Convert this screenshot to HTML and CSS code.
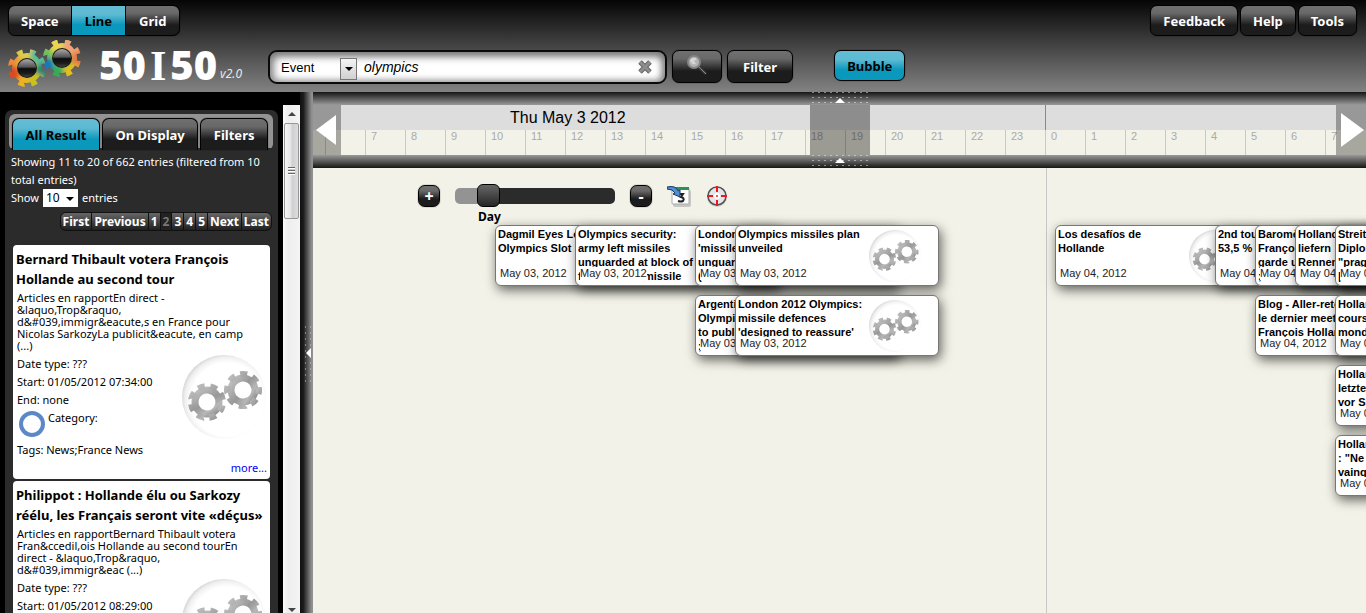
FILE: index.html
```html
<!DOCTYPE html>
<html lang="en">
<head>
<meta charset="utf-8">
<title>50I50 timeline</title>
<link rel="stylesheet" href="styles.css">
</head>
<body>
<svg class="defs" aria-hidden="true">
  <defs>
    <linearGradient id="steel" x1="0" y1="0" x2="1" y2="1">
      <stop offset="0" stop-color="#c4c4c4"/><stop offset=".5" stop-color="#989898"/><stop offset=".75" stop-color="#b8b8b8"/><stop offset="1" stop-color="#858585"/>
    </linearGradient>
    <radialGradient id="glass" cx=".54" cy=".53" r=".56">
      <stop offset=".78" stop-color="#fff"/><stop offset=".9" stop-color="#f0f0f0"/><stop offset="1" stop-color="#cfcfcf"/>
    </radialGradient>
    <linearGradient id="ball" x1="0" y1="0" x2="0" y2="1">
      <stop offset="0" stop-color="#aaa"/><stop offset=".44" stop-color="#555"/><stop offset=".54" stop-color="#0c0c0c"/><stop offset=".8" stop-color="#1c1c1c"/><stop offset="1" stop-color="#444"/>
    </linearGradient>
    <filter id="soft" x="-50%" y="-50%" width="200%" height="200%"><feGaussianBlur stdDeviation="2"/></filter>
    <mask id="cog" maskUnits="userSpaceOnUse" x="-20" y="-20" width="40" height="40">
      <circle r="15" fill="#fff"/>
      <circle r="16" fill="none" stroke="#fff" stroke-width="6" pathLength="16" stroke-dasharray=".9 1.1"/>
    </mask>
    <symbol id="badge" viewBox="0 0 84 84">
      <circle cx="42" cy="42" r="42" fill="url(#glass)"/>
      <g fill="none" stroke="url(#steel)">
        <g transform="translate(25 47) rotate(12)"><circle r="12" stroke-width="7"/><circle r="16" stroke-width="6" pathLength="16" stroke-dasharray="1.1 .9"/></g>
        <g transform="translate(61 35) rotate(-10)"><circle r="12" stroke-width="7"/><circle r="16" stroke-width="6" pathLength="16" stroke-dasharray="1.1 .9"/></g>
      </g>
    </symbol>
  </defs>
</svg>

<header class="header">
  <div class="header-row">
    <nav class="segmented" aria-label="View">
      <button class="btn seg">Space</button><button class="btn seg active">Line</button><button class="btn seg">Grid</button>
    </nav>
    <div class="menu">
      <button class="btn">Feedback</button><button class="btn">Help</button><button class="btn">Tools</button>
    </div>
  </div>
  <div class="header-row header-main">
    <div class="logo">
      <svg class="logo-mark" viewBox="0 0 74 48" aria-hidden="true">
        <g transform="translate(54 18) rotate(10)">
          <g mask="url(#cog)"><rect x="-20" y="-20" width="40" height="40" fill="#8cc152"/>
            <g filter="url(#soft)"><circle cx="-9" cy="-13" r="9" fill="#ecd450"/><circle cx="8" cy="-14" r="9" fill="#f2a278"/><circle cx="17" cy="-2" r="8" fill="#ee7a3c"/><circle cx="12" cy="13" r="9" fill="#e5c019"/><circle cx="-3" cy="16" r="8" fill="#34ab58"/><circle cx="-16" cy="10" r="9" fill="#1478bd"/><circle cx="-17" cy="-3" r="6" fill="#6fc05c"/></g></g>
        </g>
        <circle cx="54" cy="18" r="10" fill="#1a1a1a"/><circle cx="54" cy="18" r="9" fill="url(#ball)"/>
        <g transform="translate(19 28) rotate(10)">
          <g mask="url(#cog)"><rect x="-20" y="-20" width="40" height="40" fill="#d9b437"/>
            <g filter="url(#soft)"><circle cx="-5" cy="-16" r="8" fill="#d9cf50"/><circle cx="10" cy="-14" r="9" fill="#5abb9a"/><circle cx="17" cy="0" r="8" fill="#1a8b76"/><circle cx="12" cy="13" r="9" fill="#c9c21f"/><circle cx="-3" cy="17" r="8" fill="#efb21c"/><circle cx="-15" cy="9" r="9" fill="#dd4a22"/><circle cx="-17" cy="-6" r="7" fill="#ef8a3c"/></g></g>
        </g>
        <circle cx="19" cy="28" r="10" fill="#1a1a1a"/><circle cx="19" cy="28" r="9" fill="url(#ball)"/>
      </svg>
      <span class="logo-text">50<span class="logo-bar">I</span>50</span>
      <span class="version">v2.0</span>
    </div>
    <form class="search" onsubmit="return false">
      <div class="search-box">
        <label class="combo">
          <select class="combo-select" aria-label="Search type"><option>Event</option></select>
          <span class="combo-arrow"></span>
        </label>
        <input class="search-input" type="text" value="olympics" aria-label="Search text">
        <button type="button" class="clear" aria-label="Clear">
          <svg viewBox="0 0 14 14" width="14" height="14"><path d="M2 2l10 10M12 2L2 12" stroke="#666" stroke-width="5"/><path d="M2 2l10 10M12 2L2 12" stroke="#8c8c8c" stroke-width="3"/></svg>
        </button>
      </div>
      <button class="btn tall search-btn" aria-label="Search">
        <svg viewBox="0 0 22 22" width="22" height="22"><path d="M12 12l8 8" stroke="#3b3b3b" stroke-width="3"/><path d="M12 12l8 8" stroke="#888" stroke-width="1"/><circle cx="8" cy="8" r="6" fill="#b4b4b4" stroke="#858585" stroke-width="2"/><path d="M4 6q3-4 7-1l-3 2 2 3q-5 1-6-4" fill="#d6d6d6"/></svg>
      </button>
      <button class="btn tall">Filter</button>
    </form>
    <button class="btn active bubble">Bubble</button>
  </div>
</header>

<main class="main">
  <aside class="sidebar">
    <div class="panel">
      <div class="tabs">
        <button class="btn tab active">All Result</button><button class="btn tab">On Display</button><button class="btn tab">Filters</button>
      </div>
      <div class="info">
        <p class="line">Showing 11 to 20 of 662 entries (filtered from 10 total entries)</p>
        <label class="line show">Show <select class="count"><option>10</option></select> entries</label>
      </div>
      <nav class="pages" aria-label="Pages">
        <button class="page">First</button><button class="page">Previous</button><button class="page">1</button><button class="page current">2</button><button class="page">3</button><button class="page">4</button><button class="page">5</button><button class="page">Next</button><button class="page">Last</button>
      </nav>
      <article class="result">
        <h2 class="result-title">Bernard Thibault votera François Hollande au second tour</h2>
        <p class="excerpt">Articles en rapportEn direct -<br>&amp;laquo,Trop&amp;raquo,<br>d&amp;#039,immigr&amp;eacute,s en France pour<br>Nicolas SarkozyLa publicit&amp;eacute, en camp<br>(...)</p>
        <div class="facts">
          <div>
            <p>Date type: ???</p>
            <p>Start: 01/05/2012 07:34:00</p>
            <p>End: none</p>
            <p class="category"><span class="ring"></span>Category:</p>
            <p>Tags: News;France News</p>
          </div>
          <svg class="result-badge" aria-hidden="true"><use href="#badge"/></svg>
        </div>
        <a class="more" href="#">more...</a>
      </article>
      <article class="result">
        <h2 class="result-title">Philippot : Hollande élu ou Sarkozy réélu, les Français seront vite «déçus»</h2>
        <p class="excerpt">Articles en rapportBernard Thibault votera<br>Fran&amp;ccedil,ois Hollande au second tourEn<br>direct - &amp;laquo,Trop&amp;raquo,<br>d&amp;#039,immigr&amp;eac (...)</p>
        <div class="facts">
          <div>
            <p>Date type: ???</p>
            <p>Start: 01/05/2012 08:29:00</p>
          </div>
          <svg class="result-badge" aria-hidden="true"><use href="#badge"/></svg>
        </div>
      </article>
    </div>
    <div class="scrollbar" aria-hidden="true">
      <span class="caret up"></span>
      <span class="thumb"><i></i></span>
      <span class="caret down"></span>
    </div>
  </aside>
  <div class="splitter"><div class="grip"><i></i></div></div>

  <section class="timeline">
    <div class="band">
      <div class="ruler">
        <div class="days"><div class="day first-day">Thu May 3 2012</div><div class="day next-day"></div></div>
        <div class="hours">
          <span></span><span>7</span><span>8</span><span>9</span><span>10</span><span>11</span><span>12</span><span>13</span><span>14</span><span>15</span><span>16</span><span>17</span><span>18</span><span>19</span><span>20</span><span>21</span><span>22</span><span>23</span><span>0</span><span>1</span><span>2</span><span>3</span><span>4</span><span>5</span><span>6</span><span>7</span>
        </div>
      </div>
      <div class="window"><div class="handle"><i></i></div><div class="handle"><i></i></div></div>
      <button class="scroll scroll-left" aria-label="Earlier"><svg viewBox="0 0 20 30" width="20" height="30"><path d="M20 0v30L0 15z" fill="#fff"/></svg></button>
      <button class="scroll scroll-right" aria-label="Later"><svg viewBox="0 0 23 34" width="23" height="34"><path d="M0 0v34l23-17z" fill="#fff"/></svg></button>
    </div>
    <div class="canvas">
      <div class="controls">
        <button class="btn square" aria-label="Zoom in">+</button>
        <label class="zoom"><input class="range" type="range" min="0" max="10" value="1" aria-label="Zoom level"><span class="zoom-label">Day</span></label>
        <button class="btn square" aria-label="Zoom out">-</button>
        <button class="tool" aria-label="Go to date">
          <svg viewBox="0 0 24 22" width="24" height="22"><rect x="6" y="5" width="18" height="17" rx="2" fill="#aaa" opacity=".6"/><rect x="5" y="3" width="17" height="16" rx="1" fill="#fff" stroke="#aaa"/><path d="M5 2h17v3H5z" fill="#2c9155"/><path d="M11 9h5l-2 3q4 1 2 4-2 1-5 0" fill="none" stroke="#222" stroke-width="2"/><path d="M0 2q9-2 11 4l2-1v7l-7-3 2-1Q6 4 0 4z" fill="#4f8fd6" stroke="#173765"/></svg>
        </button>
        <button class="tool" aria-label="Center">
          <svg viewBox="0 0 22 22" width="22" height="22"><circle cx="11" cy="12" r="10" fill="#bbb" opacity=".6"/><circle cx="11" cy="11" r="9" fill="#e3e5e6" stroke="#505254" stroke-width="1.5"/><circle cx="11" cy="11" r="3" fill="#fff"/><path d="M11 1v6M11 15v6M1 11h6M15 11h6" stroke="#f4161b" stroke-width="2"/><circle cx="11" cy="11" r="1" fill="#e22"/></svg>
        </button>
      </div>
      <div class="midnight"></div>

      <article class="event" style="left:182px;top:57px"><h3>Dagmil Eyes London Olympics Slot</h3><time>May 03, 2012</time></article>
      <article class="event" style="left:262px;top:57px"><h3>Olympics security:<br>army left missiles<br>unguarded at block of<br>flats due for missile</h3><time>May 03, 2012</time></article>
      <article class="event" style="left:382px;top:57px"><h3>London<br>'missiles'<br>unguarded<br>(</h3><time>May 03, 2012</time></article>
      <article class="event" style="left:422px;top:57px"><h3>Olympics missiles plan unveiled</h3><time>May 03, 2012</time><svg class="event-badge" aria-hidden="true"><use href="#badge"/></svg></article>
      <article class="event" style="left:382px;top:127px"><h3>Argentina<br>Olympics<br>to public<br>;</h3><time>May 03, 2012</time></article>
      <article class="event" style="left:422px;top:127px"><h3>London 2012 Olympics: missile defences 'designed to reassure'</h3><time>May 03, 2012</time><svg class="event-badge" aria-hidden="true"><use href="#badge"/></svg></article>

      <article class="event" style="left:742px;top:57px"><h3>Los desafíos de Hollande</h3><time>May 04, 2012</time><svg class="event-badge" aria-hidden="true"><use href="#badge"/></svg></article>
      <article class="event" style="left:902px;top:57px"><h3>2nd tour<br>53,5 % des</h3><time>May 04, 2012</time></article>
      <article class="event" style="left:942px;top:57px"><h3>Baromètre<br>François<br>garde une<br>;</h3><time>May 04, 2012</time></article>
      <article class="event" style="left:982px;top:57px"><h3>Hollande<br>liefern<br>Rennen</h3><time>May 04, 2012</time></article>
      <article class="event" style="left:942px;top:127px"><h3>Blog - Aller-retour<br>le dernier meeting<br>François Hollande</h3><time>May 04, 2012</time></article>
      <article class="event" style="left:1022px;top:57px"><h3>Streit<br>Diplomatie<br>"pragmatisch<br>|</h3><time>May 04, 2012</time></article>
      <article class="event" style="left:1022px;top:127px"><h3>Hollande<br>course<br>monde</h3><time>May 04, 2012</time></article>
      <article class="event" style="left:1022px;top:197px"><h3>Hollande<br>letzte<br>vor Sieg</h3><time>May 04, 2012</time></article>
      <article class="event" style="left:1022px;top:267px"><h3>Hollande<br>: "Ne pas<br>vainqueur</h3><time>May 04, 2012</time></article>
    </div>
  </section>
</main>
</body>
</html>
```
FILE: styles.css
```css
:root {
  --ui: "Noto Sans", "Open Sans", sans-serif;
  --arial: "Liberation Sans", Arial, sans-serif;
  --dark: linear-gradient(#707070, #686868 25%, #1c1c1c 65%, #1c1c1c);
  --blue: linear-gradient(#63bdd4, #5cbad2 30%, #0a98bd 65%, #0a98bd);
  --paper: #f2f2e8;
}

* { box-sizing: border-box; }
body { margin: 0; height: 100vh; display: flex; flex-direction: column; overflow: hidden; background: #000; font: 11px/18px var(--ui); }
button, select, input { font: inherit; margin: 0; }
p, h2, h3 { margin: 0; }
.defs { position: absolute; width: 0; height: 0; }

.btn { height: 31px; padding: 0 12px; border: 1px solid #000; border-radius: 7px; background: var(--dark); color: #fff; font: 700 13px/18px var(--ui); white-space: nowrap; box-shadow: 0 0 1px #000; }
.btn.active { background: var(--blue); color: #000; }
.btn.tall { height: 33px; padding: 0 15px; }

.header { flex: none; padding: 5px 9px 4px 8px; background: linear-gradient(#050505, #828282); }
.header-row { display: flex; align-items: flex-start; }
.header-main { padding-top: 3px; }
.segmented { display: flex; }
.seg { border-radius: 0; }
.seg + .seg { border-left: 0; padding: 0 13px; }
.seg:first-child { border-radius: 7px 0 0 7px; }
.seg:last-child { border-radius: 0 7px 7px 0; }
.menu { display: flex; gap: 2px; margin-left: auto; }

.logo { display: flex; align-items: center; width: 260px; height: 49px; }
.logo-mark { flex: none; width: 74px; height: 48px; margin-right: 17px; }
.logo-text { padding-top: 3px; color: #fff; font: 800 40px/48px "Open Sans", sans-serif; white-space: nowrap; }
.logo-bar { font: 700 42px/48px "Liberation Serif", serif; margin: 0 4px; }
.version { align-self: flex-end; margin: 0 0 5px 3px; color: #e8e8e8; font-size: 12px; font-style: italic; }
.search { display: flex; gap: 5px; padding-top: 11px; }
.search-box { display: flex; align-items: center; width: 399px; height: 34px; padding: 0 13px 0 11px; border: 2px solid #0a0a0a; border-radius: 9px; background: #fff; box-shadow: inset 0 4px 9px #777, inset 4px 0 8px #aaa, inset -3px 0 7px #999; }
.combo { display: grid; width: 76px; margin-top: 3px; }
.combo > * { grid-area: 1 / 1; }
.combo-select { appearance: none; border: 0; background: none; height: 20px; padding: 0; font: 13px/20px var(--arial); }
.combo-arrow { justify-self: end; display: grid; place-items: center; width: 17px; height: 22px; border: 1px solid #777; background: linear-gradient(#f4f4f4, #d0d0d0); pointer-events: none; }
.combo-arrow::after { content: ""; border: 4px solid transparent; border-top-color: #000; border-bottom: 0; }
.search-input { flex: 1; min-width: 0; border: 0; padding: 0 0 0 7px; background: none; font: italic 14px/20px var(--arial); outline: 0; }
.clear, .tool { display: flex; padding: 0; border: 0; background: none; }
.btn.search-btn { width: 50px; padding: 0 13px; }
.bubble { margin: 11px 0 0 41px; }

.main { flex: 1; min-height: 0; display: flex; }
.sidebar { flex: none; width: 300px; display: flex; padding: 13px 0 0 5px; overflow: hidden; background: #000; }
.panel { flex: 1; min-width: 0; align-self: flex-start; margin: 5px 5px 0 0; padding: 4px 5px 4px 4px; border-radius: 7px 7px 0 0; background: #2b2b2b; }
.tabs { display: flex; gap: 2px; height: 36px; padding: 4px 5px 0 3px; border-radius: 6px; background: linear-gradient(#939393, #939393 34px, #2b2b2b 34px); }
.tab { flex: auto; height: 32px; padding: 0 11px; border-radius: 7px 7px 0 0; border-bottom: 0; }
.info { padding: 3px 0 5px 2px; color: #fff; }
.line { display: block; }
.show { position: relative; display: flex; gap: 4px; }
.count { appearance: none; width: 35px; height: 18px; padding: 0 3px; border: 0; background: #fff; color: #000; font-size: 12px; }
.show::after { content: ""; position: absolute; left: 55px; top: 8px; border: 4px solid transparent; border-top-color: #000; border-bottom: 0; pointer-events: none; }
.pages { display: flex; justify-content: flex-end; gap: 1px; width: max-content; margin: 0 1px 14px auto; border: 1px solid #111; border-radius: 6px; overflow: hidden; background: #111; }
.page { height: 17px; padding: 0 2px; border: 0; background: linear-gradient(#666, #202020); color: #fff; font: 700 12px/17px var(--ui); }
.page.current { background: #222; color: #777; }

.result { display: flex; flex-direction: column; min-height: 234px; margin: 0 3px 2px 4px; padding: 4px 3px 2px; border-radius: 4px; background: #fff; color: #000; }
.result-title { font: 700 13px/20px var(--ui); }
.excerpt { padding: 3px 1px; line-height: 12px; white-space: nowrap; }
.facts { display: flex; justify-content: space-between; padding: 0 1px; white-space: nowrap; }
.result-badge { flex: none; width: 84px; height: 84px; }
.category { display: flex; gap: 3px; height: 32px; }
.ring { width: 26px; height: 26px; margin: 2px 0 0 2px; border: 4px solid #5c88c8; border-radius: 50%; }
.more { align-self: flex-end; color: #00f; text-decoration: none; }

.scrollbar { flex: none; width: 17px; display: flex; flex-direction: column; align-items: center; padding: 7px 0 1px; background: linear-gradient(90deg, #fafafa, #eee 30%, #f4f4f4); }
.caret { border: 4px solid transparent; }
.up { border-top: 0; border-bottom-color: #444; }
.down { margin-top: auto; border-bottom: 0; border-top-color: #444; }
.thumb { display: grid; place-items: center; width: 15px; height: 96px; margin-top: 7px; border: 1px solid #979797; border-radius: 2px; background: linear-gradient(90deg, #f6f6f6, #e4e4e6 45%, #cfcfd2 55%, #dcdcde); }
.thumb i { width: 7px; height: 8px; background: repeating-linear-gradient(#666 0 1px, #fff 1px 2px, #ccc 2px 3px); }

.splitter { flex: none; width: 13px; display: grid; align-items: center; justify-items: end; background: linear-gradient(90deg, #111, #1a1a1a 25%, #999 95%, #777); }
.grip { display: flex; align-items: center; justify-content: flex-end; width: 10px; height: 58px; padding-right: 2px; background: radial-gradient(circle, #ccc, transparent 1px) 0 0 / 5px 6px; }
.grip i { border: 5px solid transparent; border-right-color: #fff; border-left: 0; }

.timeline { flex: 1; min-width: 0; display: flex; flex-direction: column; background: var(--paper); overflow: hidden; }
.band { flex: none; position: relative; padding: 13px 0; background: linear-gradient(#151515, #999 13px, #999 63px, #151515); }
.ruler { height: 50px; overflow: hidden; background: var(--paper); }
.days { display: flex; height: 25px; background: #ddd; }
.day { font: 16px/25px var(--arial); color: #000; }
.first-day { flex: none; width: 733px; padding-left: 197px; border-right: 1px solid #888; }
.hours { display: flex; padding-left: 12px; }
.hours span { flex: none; width: 40px; height: 25px; padding-left: 5px; border-left: 1px solid #c8c8c8; color: #aaa; font: 11px/13px var(--arial); }
.window { position: absolute; left: 497px; top: 0; bottom: 0; width: 60px; display: flex; flex-direction: column; justify-content: space-between; background: linear-gradient(transparent 13px, rgba(0, 0, 0, .36) 13px, rgba(0, 0, 0, .36) 63px, transparent 63px); }
.handle { display: flex; justify-content: center; align-items: center; height: 13px; padding-top: 3px; background: radial-gradient(circle, #eee, transparent 1px) 0 3px / 6px 5px; }
.handle:last-child { padding: 0 0 3px; }
.handle i { border: 5px solid transparent; border-bottom-color: #fff; border-top: 0; }
.scroll { position: absolute; top: 13px; display: flex; align-items: center; height: 50px; padding: 0; border: 0; background: rgba(0, 0, 0, .31); }
.scroll-left { left: 0; width: 28px; padding-left: 3px; }
.scroll-right { right: 0; width: 30px; padding-left: 5px; }

.canvas { flex: 1; position: relative; overflow: hidden; }
.controls { display: flex; align-items: flex-start; padding: 17px 0 0 105px; }
.btn.square { width: 22px; height: 22px; padding: 0; font-size: 16px; line-height: 18px; }
.zoom { width: 160px; margin: 0 15px; }
.range { appearance: none; display: block; width: 100%; height: 22px; background: none; }
.range::-webkit-slider-runnable-track { height: 16px; border-radius: 5px; background: linear-gradient(90deg, #939393 30px, #2b2b2b 30px); }
.range::-webkit-slider-thumb { appearance: none; width: 23px; height: 23px; margin: -4px 0 0 8px; border: 1px solid #000; border-radius: 6px; background: linear-gradient(#666, #262626); }
.zoom-label { display: block; padding: 1px 0 0 23px; color: #000; font: 700 12px/18px var(--ui); }
.tool { margin-left: 15px; }
.midnight { position: absolute; left: 733px; top: 0; bottom: 0; width: 1px; background: #c8c8c8; }

.event { position: absolute; width: 204px; height: 61px; padding: 1px 2px; border: 1px solid #777; border-radius: 6px; background: #fff; box-shadow: 2px 4px 12px rgba(0, 0, 0, .6); overflow: hidden; color: #000; }
.event h3 { width: 128px; font: 700 11px/14px var(--arial); }
.event time { position: absolute; left: 4px; bottom: 5px; background: #fff; color: #222; font: 11px/13px var(--arial); }
.event-badge { position: absolute; right: 16px; top: 4px; width: 54px; height: 52px; }
```
